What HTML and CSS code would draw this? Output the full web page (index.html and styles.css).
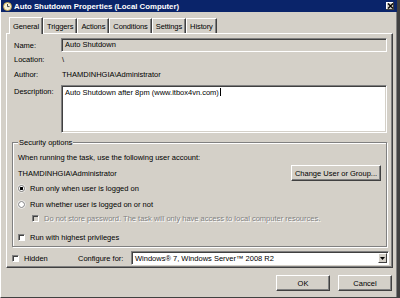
FILE: index.html
```html
<!DOCTYPE html>
<html>
<head>
<meta charset="utf-8">
<link rel="stylesheet" href="styles.css">
</head>
<body>
<div class="window">
  <div class="titlebar">
    <svg class="ticon" width="9" height="9" viewBox="0 0 9 9"><circle cx="4.5" cy="4.5" r="4" fill="#f4f0d8" stroke="#c8a030" stroke-width="0.8"/><path d="M4.5 2v2.6h2" fill="none" stroke="#333" stroke-width="0.9"/></svg>
    <span class="ttext">Auto Shutdown Properties (Local Computer)</span>
    <span class="close"><svg width="7" height="6" viewBox="0 0 7 6"><path d="M1 0.5l5 5M6 0.5l-5 5" stroke="#000" stroke-width="1.3"/></svg></span>
  </div>
  <div class="tabs">
    <span class="tab active">General</span>
    <span class="tab">Triggers</span>
    <span class="tab">Actions</span>
    <span class="tab">Conditions</span>
    <span class="tab">Settings</span>
    <span class="tab">History</span>
  </div>
  <div class="panel">
    <div class="row name-row">
      <span class="label">Name:</span>
      <span class="field ro">Auto Shutdown</span>
    </div>
    <div class="row loc-row">
      <span class="label">Location:</span>
      <span class="value">\</span>
    </div>
    <div class="row auth-row">
      <span class="label">Author:</span>
      <span class="value">THAMDINHGIA\Administrator</span>
    </div>
    <div class="row desc-row">
      <span class="label dlabel">Description:</span>
      <span class="field area">Auto Shutdown after 8pm (www.itbox4vn.com)<span class="caret"></span></span>
    </div>
    <div class="group">
      <span class="legend">Security options</span>
      <div class="gline">When running the task, use the following user account:</div>
      <div class="userrow">
        <span>THAMDINHGIA\Administrator</span>
        <span class="btn change">Change User or Group...</span>
      </div>
      <div class="opt r1"><span class="radio on"></span><span>Run only when user is logged on</span></div>
      <div class="opt r2"><span class="radio"></span><span>Run whether user is logged on or not</span></div>
      <div class="opt sub"><span class="check dis"></span><span class="distext">Do not store password.  The task will only have access to local computer resources.</span></div>
      <div class="opt r3"><span class="check"></span><span>Run with highest privileges</span></div>
    </div>
    <div class="bottomrow">
      <span class="check"></span><span class="hidden">Hidden</span>
      <span class="cfg">Configure for:</span>
      <span class="select"><span class="seltext">Windows® 7, Windows Server™ 2008 R2</span><span class="drop"><svg width="5" height="3" viewBox="0 0 5 3"><path d="M0 0h5L2.5 3z" fill="#000"/></svg></span></span>
    </div>
  </div>
  <div class="buttons">
    <span class="btn dlg">OK</span>
    <span class="btn dlg">Cancel</span>
  </div>
</div>
</body>
</html>
```
FILE: styles.css
```css
html, body { margin: 0; padding: 0; }
body {
  width: 400px; height: 298px; overflow: hidden;
  background: #d4d0c8;
  font-family: "Liberation Sans", Arial, sans-serif;
  font-size: 7.5px;
  color: #000;
}
.window {
  box-sizing: border-box;
  height: 298px; width: 400px;
  border-left: 1px solid #fff;
  border-right: 3px solid #404040;
  border-bottom: 1px solid #404040;
  box-shadow: inset -1px 0 #808080;
}
.titlebar {
  height: 12px;
  background: #0a246a;
  display: flex; align-items: center;
  padding: 0 3px 0 2px;
}
.ticon { flex: none; }
.ttext {
  color: #fff; font-weight: bold; font-size: 7.8px;
  margin-left: 2px; flex: 1;
}
.close {
  width: 8px; height: 8px; background: #d4d0c8;
  display: flex; align-items: center; justify-content: center;
  box-shadow: inset -1px -1px #404040, inset 1px 1px #fff;
}
.tabs {
  display: flex; align-items: flex-end;
  margin: 4px 0 0 8px; height: 17px;
}
.tab {
  height: 15px; box-sizing: border-box;
  padding: 3px 3px 0 3px;
  border-top: 1px solid #fff; border-left: 1px solid #fff;
  border-right: 1px solid #404040;
  box-shadow: inset -1px 0 #808080;
  letter-spacing: -0.1px;
}
.tab.active { height: 17px; padding-top: 4px; margin-bottom: -1px; background: #d4d0c8; position: relative; z-index: 1; }
.panel {
  box-sizing: border-box;
  height: 235px;
  margin: 0 4px 0 5px;
  border-top: 1px solid #fff; border-left: 1px solid #fff;
  border-right: 1px solid #404040; border-bottom: 1px solid #404040;
  box-shadow: inset -1px -1px #808080;
  padding: 4px 5px 0 7px;
}
.row { display: flex; align-items: center; }
.label { width: 47px; flex: none; }
.name-row { height: 14px; }
.field {
  flex: 1; box-sizing: border-box;
  border-top: 1px solid #808080; border-left: 1px solid #808080;
  border-bottom: 1px solid #fff; border-right: 1px solid #fff;
  box-shadow: inset 1px 1px #404040, inset -1px -1px #d4d0c8;
  padding-left: 3px;
}
.ro { height: 14px; line-height: 12px; background: #d4d0c8; }
.loc-row { height: 10px; margin-top: 2px; }
.auth-row { height: 10px; margin-top: 5px; }
.value { padding-left: 1px; }
.desc-row { margin-top: 6px; align-items: flex-start; }
.dlabel { margin-top: 2px; }
.area { height: 48px; background: #fff; padding: 2px 3px; }
.caret { display: inline-block; width: 1px; height: 8px; background: #000; vertical-align: -1px; margin-left: 1px; }
.group {
  position: relative;
  margin-top: 9px; height: 105px; box-sizing: border-box;
  margin-right: 0; margin-left: -2px;
  border: 1px solid #808080;
  box-shadow: 1px 1px #fff, inset 1px 1px #fff;
  padding: 10px 6px 0 5px;
}
.legend {
  position: absolute; top: -5px; left: 5px;
  background: #d4d0c8; padding: 0 1px;
}
.gline { height: 10px; line-height: 10px; }
.userrow { display: flex; align-items: center; justify-content: space-between; margin-top: 2px; height: 16px; }
.btn {
  box-sizing: border-box; display: flex; align-items: center; justify-content: center;
  background: #d4d0c8;
  border-top: 1px solid #fff; border-left: 1px solid #fff;
  border-right: 1px solid #404040; border-bottom: 1px solid #404040;
  box-shadow: inset -1px -1px #808080;
}
.change { width: 90px; height: 16px; margin-right: -1px; }
.opt { display: flex; align-items: center; height: 10px; }
.r1 { margin-top: 2px; }
.r2 { margin-top: 6px; }
.sub { margin-top: 4px; padding-left: 14px; }
.r3 { margin-top: 9px; }
.radio {
  width: 7px; height: 7px; border-radius: 50%; box-sizing: border-box; flex: none;
  background: #fff; border: 1px solid #808080; margin-right: 5px;
  box-shadow: 0 0 0 0.5px #fff;
}
.radio.on { background: radial-gradient(circle, #000 0 1.4px, #fff 1.6px); }
.check {
  width: 7px; height: 7px; box-sizing: border-box; flex: none;
  background: #fff; border-top: 1px solid #808080; border-left: 1px solid #808080;
  border-right: 1px solid #fff; border-bottom: 1px solid #fff;
  box-shadow: inset 1px 1px #404040;
  margin-right: 5px;
}
.check.dis { background: #d4d0c8; }
.distext { color: #808080; text-shadow: 1px 1px #fff; }
.bottomrow { display: flex; align-items: center; margin-top: 4px; height: 14px; margin-left: -2px; }
.hidden { width: 54px; }
.cfg { width: 53px; }
.select {
  flex: 1; height: 14px; box-sizing: border-box; display: flex; align-items: center;
  background: #fff;
  border-top: 1px solid #808080; border-left: 1px solid #808080;
  border-bottom: 1px solid #fff; border-right: 1px solid #fff;
  box-shadow: inset 1px 1px #404040;
  padding: 1px; margin-right: -2px;
}
.seltext { flex: 1; padding-left: 2px; }
.drop {
  width: 9px; height: 10px; box-sizing: border-box; display: flex; align-items: center; justify-content: center;
  background: #d4d0c8;
  border-top: 1px solid #fff; border-left: 1px solid #fff;
  border-right: 1px solid #404040; border-bottom: 1px solid #404040;
}
.buttons { display: flex; justify-content: flex-end; gap: 8px; margin: 7px 5px 0 0; }
.dlg { width: 54px; height: 16px; }
```
